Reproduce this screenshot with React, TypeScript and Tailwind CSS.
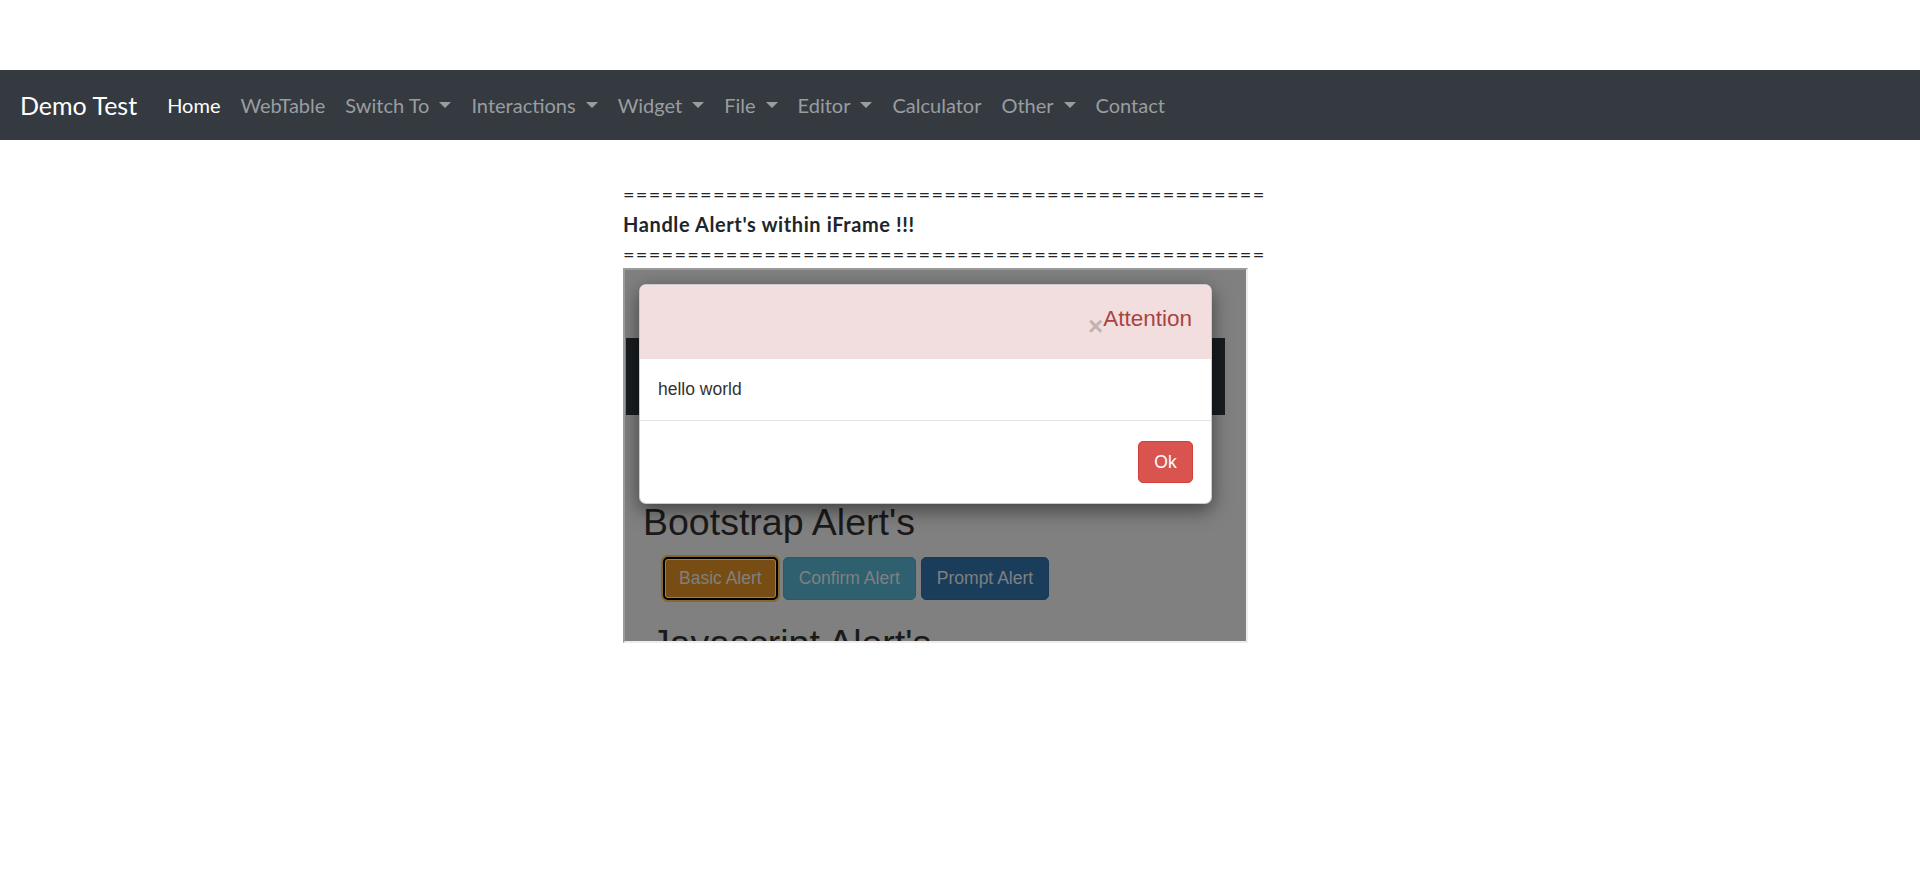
import React from "react";

/** Top-level nav entries; `drop` marks the ones with a dropdown caret. */
const NAV = [
  { label: "Home", active: true },
  { label: "WebTable" },
  { label: "Switch To", drop: true },
  { label: "Interactions", drop: true },
  { label: "Widget", drop: true },
  { label: "File", drop: true },
  { label: "Editor", drop: true },
  { label: "Calculator" },
  { label: "Other", drop: true },
  { label: "Contact" },
];

const RULE = "=".repeat(50);

function Caret() {
  return (
    <span className="ml-[10px] inline-block h-0 w-0 border-x-[6px] border-t-[6px] border-x-transparent border-t-current" />
  );
}

function Navbar() {
  return (
    <nav className="flex h-[70px] items-center bg-[#343a40] px-[20px]">
      <a className="mr-[20px] text-[25px] leading-[35px] text-white">Demo Test</a>
      <ul className="flex items-center">
        {NAV.map((n) => (
          <li key={n.label}>
            <a
              className={`flex items-center px-[10px] text-[20px] leading-[30px] ${
                n.active ? "text-white" : "text-[#9a9da0]"
              }`}
            >
              {n.label}
              {n.drop && <Caret />}
            </a>
          </li>
        ))}
      </ul>
    </nav>
  );
}

/** The dimmed page inside the frame, with the alert modal on top of it. */
function AlertFrame() {
  return (
    <div className="relative h-[375px] w-[625px] overflow-hidden border-2 border-t-[#9a9a9a] border-l-[#9a9a9a] border-r-[#ededed] border-b-[#ededed] bg-[#808080] font-['Liberation_Sans',Arial,sans-serif]">
      <div className="ml-px mt-[68px] h-[77px] w-[599px] bg-[#1a1d20]" />
      <h2 className="ml-[18px] mt-[87px] text-[37.5px] leading-[41px] text-[#1a1a1a]">
        Bootstrap Alert's
      </h2>
      <div className="ml-[38px] mt-[14px] flex gap-[5px]">
        <button className="h-[43px] rounded-[5px] border-2 border-black bg-[#784d14] px-[14px] text-[17.5px] text-[#808080] shadow-[inset_0_0_0_1px_#9a8050,0_0_0_2px_#86672c]">
          Basic Alert
        </button>
        <button className="h-[43px] rounded-[5px] border border-[#2a5a68] bg-[#2e606f] px-[15px] text-[17.5px] text-[#808080]">
          Confirm Alert
        </button>
        <button className="h-[43px] rounded-[5px] border border-[#173a58] bg-[#1a3d5c] px-[15px] text-[17.5px] text-[#808080]">
          Prompt Alert
        </button>
      </div>
      <h2 className="ml-[26px] mt-[23px] text-[37.5px] leading-[41px] text-[#1a1a1a]">
        Javascript Alert's
      </h2>

      <div className="absolute left-[14px] top-[14px] w-[573px] overflow-hidden rounded-[7px] border border-black/20 bg-white shadow-[0_6px_19px_rgba(0,0,0,0.5)]">
        <div className="flex h-[74px] justify-end bg-[#f2dede] pr-[19px]">
          <span className="mt-[28px] text-[26px] font-bold leading-[26px] text-[#c2b2b2]">×</span>
          <h4 className="mt-[21px] text-[22.5px] leading-[25px] text-[#a94442]">Attention</h4>
        </div>
        <div className="border-b border-[#e5e5e5] px-[18px] py-[18px] text-[17.5px] leading-[25px] text-[#333]">
          hello world
        </div>
        <div className="flex justify-end px-[18px] py-[20px]">
          <button className="h-[42px] w-[55px] rounded-[5px] border border-[#d43f3a] bg-[#d9534f] text-[17.5px] text-white">
            Ok
          </button>
        </div>
      </div>
    </div>
  );
}

export default function App() {
  return (
    <div className="min-h-[887px] bg-white pt-[70px] font-['Lato',sans-serif]">
      <Navbar />
      <main className="ml-[623px] mt-[39px] text-[20px] text-[#212529]">
        <div className="h-[30px] leading-[30px] tracking-[1.25px]">{RULE}</div>
        <div className="h-[30px] font-bold leading-[30px] tracking-[0.6px]">
          Handle Alert's within iFrame !!!
        </div>
        <div className="h-[29px] leading-[30px] tracking-[1.25px]">{RULE}</div>
        <AlertFrame />
      </main>
    </div>
  );
}
